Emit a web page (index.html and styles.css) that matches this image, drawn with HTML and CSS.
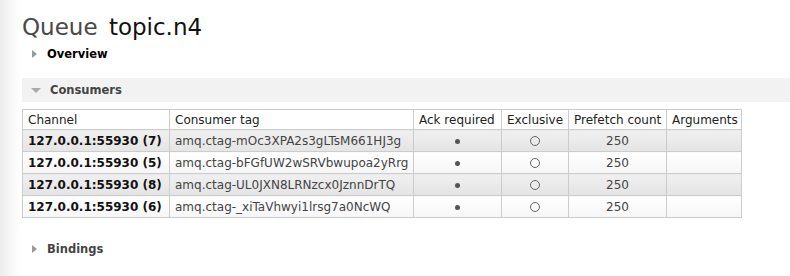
FILE: index.html
```html
<!DOCTYPE html>
<html lang="en">
  <head>
    <meta charset="UTF-8" />
    <title>Queue topic.n4</title>
    <link rel="stylesheet" href="styles.css">
  </head>
  <body>
    <div class="main">
      <h1>Queue <b>topic.n4</b></h1>

      <div class="section closed first">
        <h2><span class="arrow"></span>Overview</h2>
      </div>

      <div class="section open">
        <h2><span class="arrow"></span>Consumers</h2>
        <table class="list">
          <thead>
            <tr>
              <th class="c-channel">Channel</th>
              <th class="c-tag">Consumer tag</th>
              <th class="c-ack">Ack required</th>
              <th class="c-excl">Exclusive</th>
              <th class="c-prefetch">Prefetch count</th>
              <th class="c-args">Arguments</th>
            </tr>
          </thead>
          <tbody>
            <tr class="alt1">
              <td class="channel">127.0.0.1:55930 (7)</td>
              <td>amq.ctag-mOc3XPA2s3gLTsM661HJ3g</td>
              <td class="c"><span class="dot"></span></td>
              <td class="c"><span class="ring"></span></td>
              <td class="c">250</td>
              <td></td>
            </tr>
            <tr class="alt2">
              <td class="channel">127.0.0.1:55930 (5)</td>
              <td>amq.ctag-bFGfUW2wSRVbwupoa2yRrg</td>
              <td class="c"><span class="dot"></span></td>
              <td class="c"><span class="ring"></span></td>
              <td class="c">250</td>
              <td></td>
            </tr>
            <tr class="alt1">
              <td class="channel">127.0.0.1:55930 (8)</td>
              <td>amq.ctag-UL0JXN8LRNzcx0JznnDrTQ</td>
              <td class="c"><span class="dot"></span></td>
              <td class="c"><span class="ring"></span></td>
              <td class="c">250</td>
              <td></td>
            </tr>
            <tr class="alt2">
              <td class="channel">127.0.0.1:55930 (6)</td>
              <td>amq.ctag-_xiTaVhwyi1lrsg7a0NcWQ</td>
              <td class="c"><span class="dot"></span></td>
              <td class="c"><span class="ring"></span></td>
              <td class="c">250</td>
              <td></td>
            </tr>
          </tbody>
        </table>
      </div>

      <div class="section closed">
        <h2><span class="arrow"></span>Bindings</h2>
      </div>
    </div>
  </body>
</html>
```

FILE: styles.css
```css
body {
  margin: 0;
  font-family: "DejaVu Sans", Verdana, sans-serif;
  font-size: 12px;
  color: #444;
  background: linear-gradient(to right, #ececec 0, #f8f8f8 12px, #fff 21px) repeat-y;
  min-height: 276px;
}
.main {
  padding: 12px 0 0 22px;
}
h1 {
  margin: 0;
  font-size: 23px;
  font-weight: normal;
  line-height: 30px;
  color: #484848;
}
h1 b {
  font-weight: normal;
  color: #111;
  margin-left: 4px;
}
h2 {
  margin: 0;
  font-size: 11.5px;
  font-weight: bold;
  line-height: 24px;
  padding-left: 10px;
  display: flex;
  align-items: center;
  color: #444;
}
.arrow {
  width: 0;
  height: 0;
  margin-right: 10px;
}
.closed .arrow {
  border-top: 4.5px solid transparent;
  border-bottom: 4.5px solid transparent;
  border-left: 5px solid #999;
}
.open .arrow {
  border-left: 5px solid transparent;
  border-right: 5px solid transparent;
  border-top: 5px solid #aaa;
  margin-left: -1px;
  margin-right: 9px;
}
.section.first {
  margin-bottom: 12px;
}
.section.first h2 {
  color: #000;
}
.open h2 {
  background: #f2f2f2;
}
.section.open {
  margin-bottom: 19px;
}
.list {
  border-collapse: collapse;
  margin-top: 7px;
  width: 720px;
  table-layout: fixed;
}
.list th,
.list td {
  border: 1px solid #ccc;
  padding: 0 5px;
  white-space: nowrap;
  overflow: hidden;
  color: #444;
}
.list th {
  font-weight: normal;
  text-align: left;
  height: 19px;
  color: #222;
  background: #fff;
}
.list td {
  height: 21px;
}
.c-channel { width: 136px; }
.c-tag { width: 233px; }
.c-ack { width: 77px; }
.c-excl { width: 56px; }
.c-prefetch { width: 87px; }
.list td.channel {
  font-weight: bold;
  color: #111;
}
.list td.c {
  text-align: center;
}
.alt1 td {
  background: linear-gradient(#f0f0f0, #e4e4e4);
}
.alt2 td {
  background: linear-gradient(#fff, #f6f6f6);
}
.dot {
  display: inline-block;
  width: 5px;
  height: 5px;
  border-radius: 50%;
  background: #555;
  vertical-align: middle;
}
.ring {
  display: inline-block;
  width: 8px;
  height: 8px;
  border: 1px solid #666;
  border-radius: 50%;
  vertical-align: middle;
}
```
